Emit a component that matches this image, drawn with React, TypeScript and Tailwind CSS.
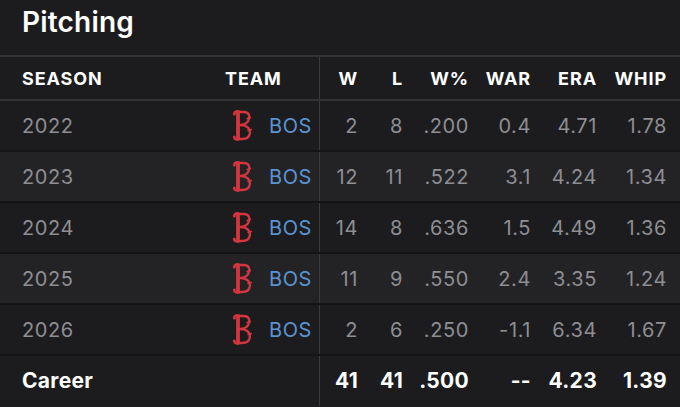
import React from 'react';

const rows = [
  { season: '2022', w: '2', l: '8', pct: '.200', war: '0.4', era: '4.71', whip: '1.78' },
  { season: '2023', w: '12', l: '11', pct: '.522', war: '3.1', era: '4.24', whip: '1.34' },
  { season: '2024', w: '14', l: '8', pct: '.636', war: '1.5', era: '4.49', whip: '1.36' },
  { season: '2025', w: '11', l: '9', pct: '.550', war: '2.4', era: '3.35', whip: '1.24' },
  { season: '2026', w: '2', l: '6', pct: '.250', war: '-1.1', era: '6.34', whip: '1.67' },
];

const cols = 'grid grid-cols-[225px_95px_38px_45px_66px_62px_66px_70px_13px]';

function SoxB() {
  return (
    <svg width="21" height="33" viewBox="0 0 21 33" fill="none" stroke="#d3363f" strokeLinecap="round">
      <path d="M6 3 V30" strokeWidth="3.8" />
      <path d="M2.5 3.5 C4 2 6 2.5 7 3 H12 C16.5 3 18 6.5 17 10 C16 13.5 13 15.5 9 16" strokeWidth="2.4" />
      <path d="M9 16 C14.5 16 18.5 19.5 17.8 24.5 C17 29 13.5 30 10 30 H7 C5.5 30.5 4 31 2.5 29.5" strokeWidth="2.4" />
      <path d="M6 16 H9" strokeWidth="2" />
      <circle cx="2.3" cy="5" r="1.5" fill="#d3363f" stroke="none" />
      <circle cx="2.3" cy="28" r="1.5" fill="#d3363f" stroke="none" />
      <path d="M15 9.5 L18.5 8.5 M16 21.5 L19.5 20.5" strokeWidth="1.4" />
    </svg>
  );
}

export default function App() {
  return (
    <div className="w-[680px] h-[407px] bg-[#1c1c1e] overflow-hidden" style={{ fontFamily: 'Inter, "Noto Sans", sans-serif' }}>
      <h1 className="h-[55px] pl-[22px] pt-[2px] text-[28px] font-semibold text-white leading-[40px] tracking-[0.2px]">Pitching</h1>

      <div className="border-t-2 border-[#333336]">
        {/* header */}
        <div className={`${cols} h-[44px] items-center text-[18px] font-bold text-white tracking-[0.9px] border-b-2 border-[#333336]`}>
          <div className="pl-[22px]">SEASON</div>
          <div className="self-stretch flex items-center border-r border-[#3a3a3c]">TEAM</div>
          <div className="text-right">W</div>
          <div className="text-right">L</div>
          <div className="text-right">W%</div>
          <div className="text-right">WAR</div>
          <div className="text-right">ERA</div>
          <div className="text-right">WHIP</div>
          <div />
        </div>

        {rows.map((r, i) => (
          <div
            key={r.season}
            className={`${cols} h-[51px] items-center text-[20px] text-[#8e8e93] tracking-[0.6px] border-b-2 border-[#141416] ${i % 2 === 1 ? 'bg-[#232325]' : 'bg-[#1c1c1e]'}`}
          >
            <div className="pl-[22px]">{r.season}</div>
            <div className="self-stretch flex items-center gap-[16px] pl-[7px] border-r border-[#3a3a3c]">
              <SoxB />
              <span className="text-[#5a93d3]">BOS</span>
            </div>
            <div className="text-right">{r.w}</div>
            <div className="text-right">{r.l}</div>
            <div className="text-right">{r.pct}</div>
            <div className="text-right">{r.war}</div>
            <div className="text-right">{r.era}</div>
            <div className="text-right">{r.whip}</div>
            <div />
          </div>
        ))}

        {/* career */}
        <div className={`${cols} h-[50px] items-center text-[21px] font-bold text-white tracking-[0.3px] bg-[#1c1c1e]`}>
          <div className="pl-[22px]">Career</div>
          <div className="self-stretch border-r border-[#3a3a3c]" />
          <div className="text-right">41</div>
          <div className="text-right">41</div>
          <div className="text-right">.500</div>
          <div className="text-right">--</div>
          <div className="text-right">4.23</div>
          <div className="text-right">1.39</div>
          <div />
        </div>
      </div>
    </div>
  );
}
